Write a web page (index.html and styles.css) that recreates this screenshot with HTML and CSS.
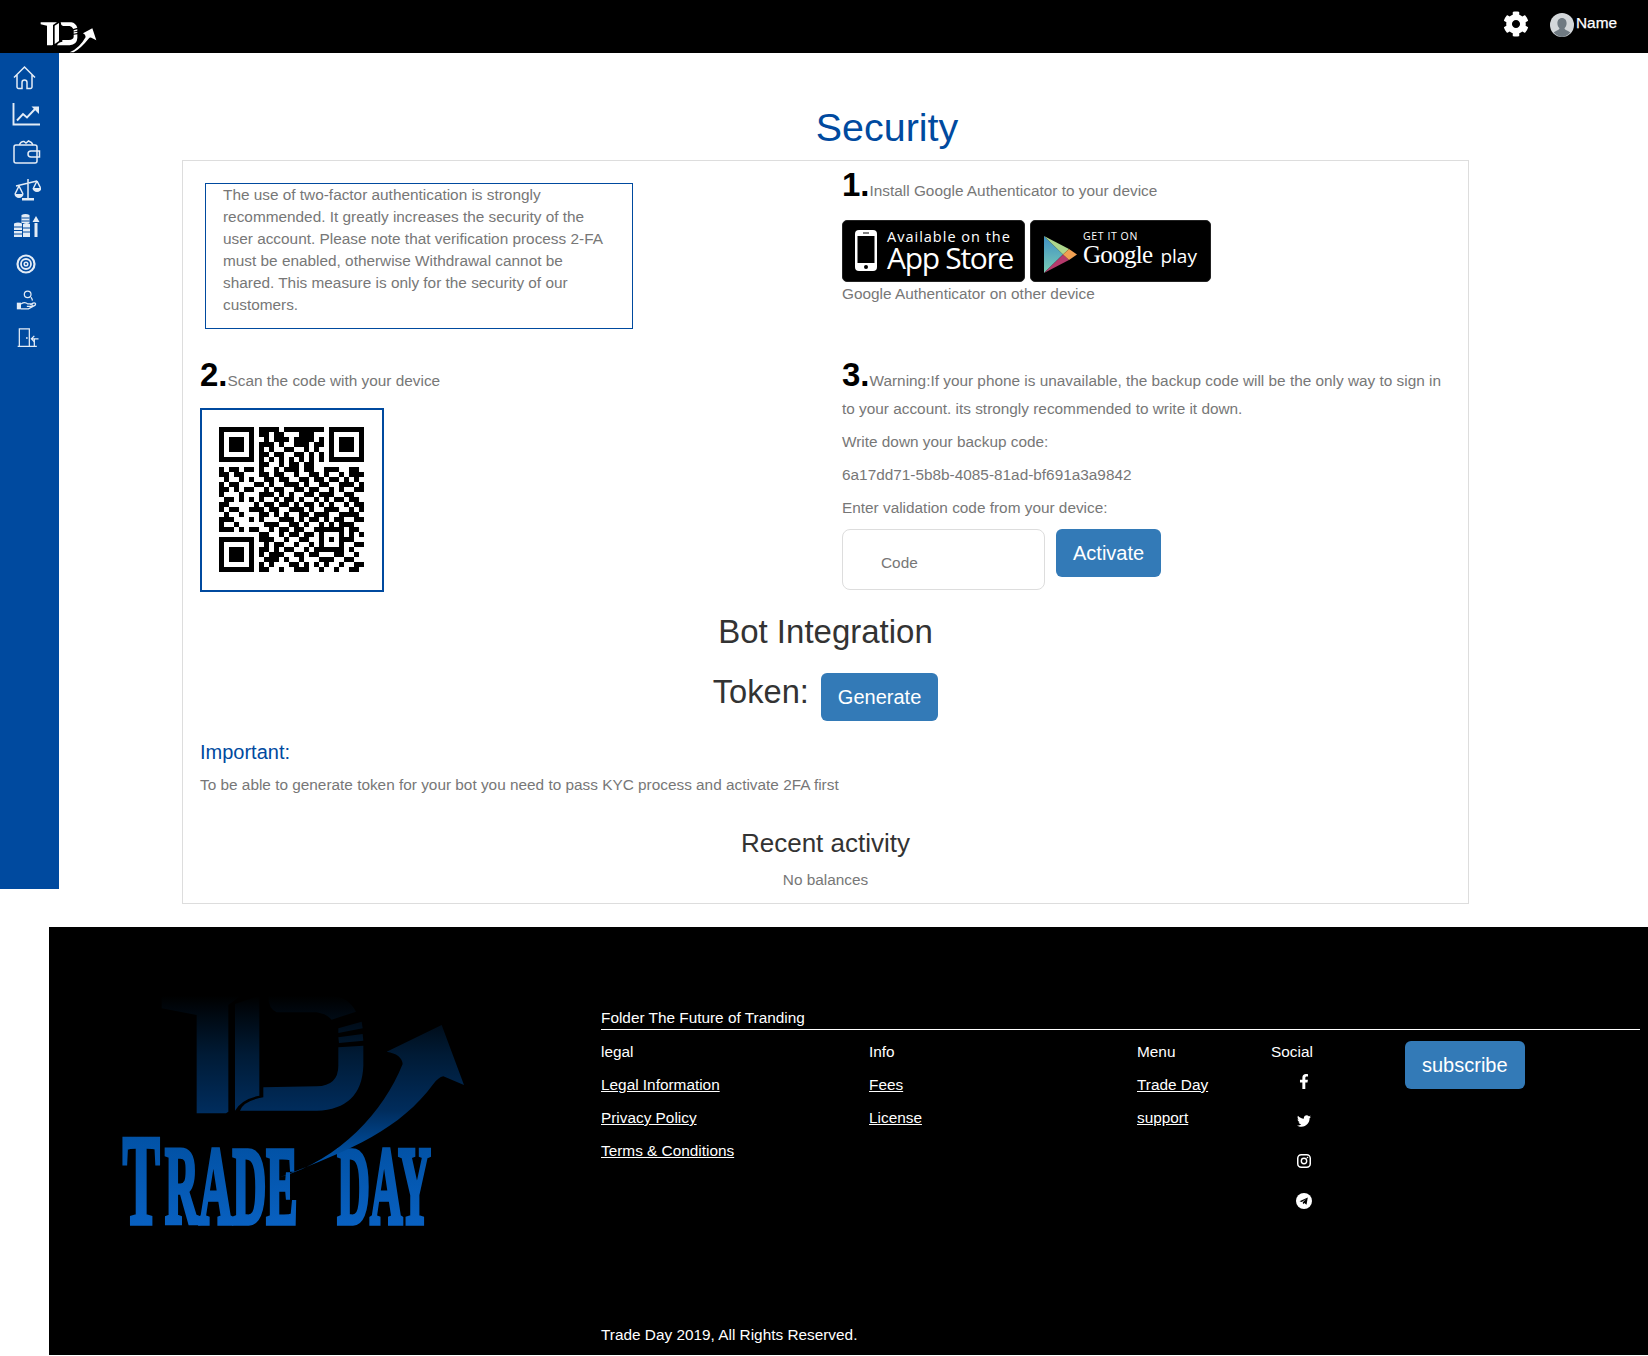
FILE: index.html
```html
<!DOCTYPE html>
<html lang="en">
<head>
<meta charset="utf-8">
<title>Security</title>
<link rel="stylesheet" href="styles.css">
</head>
<body>
<header class="topbar">
  <svg class="top-logo" viewBox="115 55 180 105" aria-label="TD logo">
    <path d="M123 68H172L160 76V135L157 137H142V78L123 74Z"/>
    <path d="M165 78L178 70V124L165 133Z"/>
    <path d="M183 68H215Q228 70 233 84L221 88Q217 80 210 79H190Q183 76 183 68Z"/>
    <path d="M222 92L233 89V93L222 96ZM222 98L233 96V100L222 102Z"/>
    <path d="M222 105L233 104V115Q232 135 210 137H172Q175 128 188 126V121H208Q221 120 222 112Z"/>
    <path d="M210 158Q240 145 258 112Q258 105 250 101L278 86L290 122L275 114Q270 113 266 118Q245 145 222 158Z"/>
  </svg>
  <div class="top-actions">
    <svg class="gear" viewBox="0 0 512 512"><path d="M487.4 315.7l-42.6-24.6c4.3-23.2 4.3-47 0-70.2l42.6-24.6c4.9-2.8 7.1-8.6 5.5-14-11.1-35.6-30-67.8-54.7-94.6-3.8-4.1-10-5.1-14.8-2.3L380.8 110c-17.9-15.4-38.5-27.3-60.8-35.1V25.8c0-5.6-3.9-10.5-9.4-11.7-36.7-8.2-74.3-7.8-109.2 0-5.5 1.2-9.4 6.1-9.4 11.7V75c-22.2 7.9-42.8 19.8-60.8 35.1L88.7 85.5c-4.9-2.8-11-1.9-14.8 2.3-24.7 26.7-43.6 58.9-54.7 94.6-1.7 5.4.6 11.2 5.5 14L67.3 221c-4.3 23.2-4.3 47 0 70.2l-42.6 24.6c-4.9 2.8-7.1 8.6-5.5 14 11.1 35.6 30 67.8 54.7 94.6 3.8 4.1 10 5.1 14.8 2.3l42.6-24.6c17.9 15.4 38.5 27.3 60.8 35.1v49.2c0 5.6 3.9 10.5 9.4 11.7 36.7 8.2 74.3 7.8 109.2 0 5.5-1.2 9.4-6.1 9.4-11.7v-49.2c22.2-7.9 42.8-19.8 60.8-35.1l42.6 24.6c4.9 2.8 11 1.9 14.8-2.3 24.7-26.7 43.6-58.9 54.7-94.6 1.5-5.5-.7-11.3-5.6-14.1zM256 336c-44.1 0-80-35.9-80-80s35.9-80 80-80 80 35.9 80 80-35.9 80-80 80z"/></svg>
    <div class="user">
      <svg class="avatar" viewBox="0 0 24 24"><circle cx="12" cy="12" r="12" fill="#d3d7da"/><path d="M12 5c3 0 4.600 2.400 4.600 5.300 0 2.200-.9 4-2.100 5 .2 1 .9 1.600 2.500 2.200 1.500.5 2.600 1.300 3.300 2.100A12 12 0 0 1 12 24a12 12 0 0 1-8.300-4.400c.7-.8 1.800-1.600 3.300-2.100 1.600-.6 2.300-1.200 2.500-2.200-1.200-1-2.100-2.800-2.100-5C7.400 7.400 9 5 12 5z" fill="#6f7a82"/></svg>
      <span class="user-name">Name</span>
    </div>
  </div>
</header>

<div class="layout">
  <nav class="sidebar">
    <svg class="nav-icon" viewBox="0 0 30 30"><path d="M3 15.500 13.500 5 24 15.500M6 13v12a1.500 1.500 0 0 0 1.500 1.500H11v-6a2.500 2.500 0 0 1 5 0v6h3.500A1.500 1.500 0 0 0 21 25V13"/></svg>
    <svg class="nav-icon icon-bold" viewBox="0 0 30 30"><path d="M2.500 4v21.500H29"/><path d="M6 21.500l6-6.500 4 3.500 8.500-9"/><path class="solid" d="M20.500 7.500H28V15z"/></svg>
    <svg class="nav-icon" viewBox="0 0 30 30"><path d="M5 8h19a2 2 0 0 1 2 2v14a2 2 0 0 1-2 2H5a2 2 0 0 1-2-2V10a2 2 0 0 1 2-2z"/><path d="M20 14h8.500v6H20a3 3 0 0 1 0-6z"/><path d="M8.500 8a4 4 0 0 1 4.500-3.500L15 6l2.500-2 3 1.500L22 8"/></svg>
    <svg class="nav-icon" viewBox="-1 0 30 30"><path d="M16 5v20M4 12l21-5"/><path d="M7 12l-4 8M7 12l4 8M25 7l-3.500 7M25 7l3.500 7"/><path class="solid" d="M2.500 20a4.500 4 0 0 0 9 0zM20.500 14a4.500 4 0 0 0 9 0zM10 24h12v2.500H10z"/></svg>
    <svg class="nav-icon" viewBox="0 1 30 30"><path class="solid" d="M3 13.500q4-2 8 0V27H3zM12 14q3.500-2 7 0v13h-7zM10.500 5q4-2 8 0v8h-8zM23.500 13h3v14h-3zM25 6l3.500 6h-7z"/><path class="cut" d="M3 17h8M3 20.500h8M3 24h8M12 18h7M12 22h7M10.500 8h8M10.500 11h8"/></svg>
    <svg class="nav-icon" viewBox="0 -1 30 30"><circle cx="15" cy="15" r="8.500" stroke-width="2.200"/><circle cx="15" cy="15" r="5" stroke-width="1.800"/><circle cx="15" cy="15" r="1.800" stroke-width="1.500"/></svg>
    <svg class="nav-icon" viewBox="-3 -2 36 36"><circle cx="17" cy="8" r="4"/><path class="solid" d="M4 18h5v8H4z"/><path d="M9 19.500c3-2 6-2 8 0h4c2 0 2 3 0 3h-5M9 25.500h9l8-4.500c1.500-2-.5-3.500-2.500-2.500L20 20.500"/><path d="M21 11.500c1 1.500 2 2.500 1.500 4"/></svg>
    <svg class="nav-icon" viewBox="-4 -2 36 36"><path d="M6 26V5h12v21M4 26h23M24 17v9"/><path d="M29 17h-8M24 13.500 20.500 17l3.500 3.500"/><path class="solid" d="M14 15h2v2h-2z"/></svg>
  </nav>

  <main class="content">
    <h1 class="page-title">Security</h1>
    <section class="panel">
      <div class="steps">
        <div class="notice">The use of two-factor authentication is strongly recommended. It greatly increases the security of the user account. Please note that verification process 2-FA must be enabled, otherwise Withdrawal cannot be shared. This measure is only for the security of our customers.</div>
        <div class="step-one">
          <p class="step-line"><b class="num">1.</b>Install Google Authenticator to your device</p>
          <div class="badges">
            <div class="badge badge-apple">
              <svg class="phone" viewBox="0 0 22 41"><rect width="22" height="41" rx="4" fill="#fff"/><rect x="2.500" y="6" width="17" height="27" fill="#000"/><circle cx="11" cy="37" r="2" fill="#000"/><rect x="8" y="2.500" width="6" height="1" fill="#000"/></svg>
              <div class="badge-text">
                <span class="apple-small">Available on the</span>
                <span class="apple-big">App Store</span>
              </div>
            </div>
            <div class="badge badge-play">
              <svg class="play-mark" viewBox="0 0 33 37"><defs><linearGradient id="playblue" x1="0" y1="0" x2="0" y2="1"><stop offset="0" stop-color="#3f8fc4"/><stop offset="1" stop-color="#79cdb4"/></linearGradient></defs><polygon points="0,0 0,37 19,18.500" fill="url(#playblue)"/><polygon points="0,0 19,18.500 25,13" fill="#add68c"/><polygon points="0,37 19,18.500 25,24" fill="#b53a6c"/><polygon points="25,13 33,18.500 25,24 19,18.500" fill="#f1a052"/></svg>
              <div class="badge-text">
                <span class="play-small">GET IT ON</span>
                <span class="play-big"><span class="play-google">Google</span><span class="play-word">play</span></span>
              </div>
            </div>
          </div>
          <p class="plain-line auth-other">Google Authenticator on other device</p>
        </div>
        <div class="step-two">
          <p class="step-line"><b class="num">2.</b>Scan the code with your device</p>
          <div class="qr-frame">
            <svg class="qr" viewBox="0 0 29 29" shape-rendering="crispEdges">
              <path fill-rule="evenodd" d="M0 0h7v7H0zM1 1v5h5V1zM2 2h3v3H2zM22 0h7v7h-7zM23 1v5h5V1zM24 2h3v3h-3zM0 22h7v7H0zM1 23v5h5v-5zM2 24h3v3H2z"/>
              <path class="qr-runs" d="M8 .5h4M13 .5h8M8 1.500h2M11 1.500h2M16 1.500h3M9 2.500h1M11 2.500h3M15 2.500h4M20 2.500h1M8 3.500h3M12 3.500h1M15 3.500h3M19 3.500h2M8 4.500h1M10 4.500h1M13 4.500h2M17 4.500h1M19 4.500h1M8 5.500h2M11 5.500h2M15 5.500h2M18 5.500h1M20 5.500h1M8 6.500h1M10 6.500h1M12 6.500h1M14 6.500h1M16 6.500h1M18 6.500h1M20 6.500h1M8 7.500h2M12 7.500h1M14 7.500h2M17 7.500h2
              M0 8.500h1M2 8.500h2M5 8.500h2M8 8.500h1M11 8.500h1M13 8.500h3M17 8.500h2M21 8.500h3M26 8.500h2
              M0 9.500h2M3 9.500h2M8 9.500h2M11 9.500h2M15 9.500h1M18 9.500h2M21 9.500h1M24 9.500h1M26 9.500h3
              M1 10.500h1M4 10.500h1M6 10.500h1M9 10.500h2M12 10.500h2M16 10.500h2M19 10.500h2M22 10.500h2M25 10.500h1M27 10.500h1
              M0 11.500h1M2 11.500h2M7 11.500h2M10 11.500h1M13 11.500h3M17 11.500h1M20 11.500h2M24 11.500h3M28 11.500h1
              M0 12.500h2M3 12.500h1M5 12.500h2M9 12.500h1M11 12.500h2M15 12.500h2M18 12.500h2M22 12.500h1M24 12.500h1M27 12.500h2
              M0 13.500h1M4 13.500h1M8 13.500h3M12 13.500h1M14 13.500h1M17 13.500h2M20 13.500h3M25 13.500h2
              M1 14.500h2M4 14.500h1M6 14.500h1M8 14.500h1M11 14.500h1M13 14.500h2M16 14.500h1M19 14.500h1M21 14.500h1M23 14.500h2M26 14.500h2
              M0 15.500h2M7 15.500h1M9 15.500h2M12 15.500h2M15 15.500h1M17 15.500h2M20 15.500h1M22 15.500h1M25 15.500h1M27 15.500h2
              M0 16.500h1M2 16.500h2M6 16.500h3M10 16.500h2M14 16.500h3M18 16.500h1M21 16.500h3M26 16.500h1M28 16.500h1
              M1 17.500h1M4 17.500h1M8 17.500h2M11 17.500h1M13 17.500h1M16 17.500h2M19 17.500h3M24 17.500h4
              M0 18.500h3M6 18.500h1M8 18.500h1M12 18.500h3M16 18.500h1M18 18.500h2M21 18.500h1M23 18.500h2M27 18.500h2
              M0 19.500h1M3 19.500h1M9 19.500h3M14 19.500h2M17 19.500h1M20 19.500h1M22 19.500h1M24 19.500h3
              M0 20.500h3M4 20.500h1M6 20.500h2M10 20.500h1M12 20.500h2M15 20.500h2M19 20.500h6M26 20.500h2
              M8 21.500h2M12 21.500h1M14 21.500h2M17 21.500h2M20 21.500h1M24 21.500h1M26 21.500h1M28 21.500h1
              M8 22.500h3M13 22.500h1M16 22.500h2M20 22.500h1M22 22.500h1M24 22.500h3
              M9 23.500h1M11 23.500h2M15 23.500h1M18 23.500h1M20 23.500h1M24 23.500h1M27 23.500h2
              M8 24.500h2M11 24.500h1M13 24.500h2M17 24.500h1M19 24.500h6M26 24.500h1
              M8 25.500h1M10 25.500h3M15 25.500h2M18 25.500h2M23 25.500h2M27 25.500h1
              M9 26.500h3M13 26.500h1M16 26.500h1M20 26.500h3M25 26.500h2
              M8 27.500h1M10 27.500h1M14 27.500h2M17 27.500h1M19 27.500h1M21 27.500h1M24 27.500h1M27 27.500h2
              M8 28.500h2M12 28.500h1M15 28.500h3M20 28.500h1M23 28.500h1M26 28.500h2"/>
            </svg>
          </div>
        </div>
        <div class="step-three">
          <p class="step-line step-warning"><b class="num">3.</b>Warning:If your phone is unavailable, the backup code will be the only way to sign in to your account. its strongly recommended to write it down.</p>
          <p class="plain-line spaced">Write down your backup code:</p>
          <p class="plain-line spaced">6a17dd71-5b8b-4085-81ad-bf691a3a9842</p>
          <p class="plain-line spaced last-spaced">Enter validation code from your device:</p>
          <div class="activate-row">
            <input class="code-input" type="text" placeholder="Code">
            <button class="btn" type="button">Activate</button>
          </div>
        </div>
      </div>

      <h2 class="bot-title">Bot Integration</h2>
      <div class="token-row">
        <span class="token-label">Token:</span>
        <button class="btn" type="button">Generate</button>
      </div>
      <h4 class="important">Important:</h4>
      <p class="plain-line">To be able to generate token for your bot you need to pass KYC process and activate 2FA first</p>
      <h3 class="recent-title">Recent activity</h3>
      <p class="plain-line centered">No balances</p>
    </section>
  </main>
</div>

<footer class="footer">
  <svg class="footer-logo" viewBox="0 0 1200 820" aria-label="Trade Day logo">
    <defs>
      <linearGradient id="logograd" gradientUnits="userSpaceOnUse" x1="0" y1="50" x2="0" y2="740">
        <stop offset="0" stop-color="#000000"/>
        <stop offset=".25" stop-color="#001a34"/>
        <stop offset=".5" stop-color="#002c5c"/>
        <stop offset=".68" stop-color="#004e9e"/>
        <stop offset="1" stop-color="#0a64c8"/>
      </linearGradient>
      <linearGradient id="wordgrad" x1="0" y1="0" x2="0" y2="1">
        <stop offset="0" stop-color="#004e9e"/>
        <stop offset="1" stop-color="#0a64c8"/>
      </linearGradient>
    </defs>
    <g class="logo-fill">
      <path d="M185 52H420L385 78V398L378 403H290V108L185 88Z"/>
      <path d="M405 395V75L478 50V350Q425 360 405 395Z"/>
      <path d="M505 52H700Q745 55 768 98L695 122Q680 105 650 100H530Q505 90 505 52Z"/>
      <path d="M715 148L785 128L788 148L715 162ZM715 175L788 165L790 185L717 192Z"/>
      <path d="M715 205L790 200V260Q785 390 650 395H420Q430 365 490 355V325L650 322Q715 320 715 260Z"/>
    </g>
    <text class="logo-word" transform="translate(68 731) scale(.44 1)" font-size="378">T</text>
    <text class="logo-word" transform="translate(195 731) scale(.425 1)" font-size="330">RADE</text>
    <text class="logo-word" transform="translate(712 731) scale(.41 1)" font-size="330">DAY</text>
    <path class="logo-fill" d="M540 595C720 540 850 400 908 255Q905 225 860 218L1025 138L1092 318L1030 292Q1015 295 1000 315C900 450 760 510 540 595Z"/>
  </svg>
  <div class="footer-main">
    <div class="tagline">Folder The Future of Tranding</div>
    <div class="footer-cols">
      <div class="fcol">
        <div class="frow">legal</div>
        <a class="frow flink" href="#">Legal Information</a>
        <a class="frow flink" href="#">Privacy Policy</a>
        <a class="frow flink" href="#">Terms &amp; Conditions</a>
      </div>
      <div class="fcol">
        <div class="frow">Info</div>
        <a class="frow flink" href="#">Fees</a>
        <a class="frow flink" href="#">License</a>
      </div>
      <div class="fcol">
        <div class="frow">Menu</div>
        <a class="frow flink" href="#">Trade Day</a>
        <a class="frow flink" href="#">support</a>
      </div>
      <div class="fcol">
        <div class="social-title">Social</div>
        <div class="social-icon"><svg class="si-f" viewBox="0 0 320 512"><path d="M279.14 288l14.22-92.66h-88.91v-60.13c0-25.35 12.42-50.06 52.24-50.06h40.42V6.26S260.43 0 225.36 0c-73.22 0-121.08 44.38-121.08 124.72v70.62H22.89V288h81.39v224h100.17V288z"/></svg></div>
        <div class="social-icon"><svg class="si-t" viewBox="0 0 512 512"><path d="M459.37 151.716c.325 4.548.325 9.097.325 13.645 0 138.72-105.583 298.558-298.558 298.558-59.452 0-114.68-17.219-161.137-47.106 8.447.974 16.568 1.299 25.34 1.299 49.055 0 94.213-16.568 130.274-44.832-46.132-.975-84.792-31.188-98.112-72.772 6.498.974 12.995 1.624 19.818 1.624 9.421 0 18.843-1.3 27.614-3.573-48.081-9.747-84.143-51.98-84.143-102.985v-1.299c13.969 7.797 30.214 12.67 47.431 13.319-28.264-18.843-46.781-51.005-46.781-87.391 0-19.492 5.197-37.36 14.294-52.954 51.655 63.675 129.3 105.258 216.365 109.807-1.624-7.797-2.599-15.918-2.599-24.04 0-57.828 46.782-104.934 104.934-104.934 30.213 0 57.502 12.67 76.67 33.137 23.715-4.548 46.456-13.32 66.599-25.34-7.798 24.366-24.366 44.833-46.132 57.827 21.117-2.273 41.584-8.122 60.426-16.243-14.292 20.791-32.161 39.308-52.628 54.253z"/></svg></div>
        <div class="social-icon"><svg class="si-i" viewBox="0 0 14 14"><rect x=".75" y=".75" width="12.500" height="12.500" rx="3.500" fill="none" stroke="#fff" stroke-width="1.500"/><circle cx="7" cy="7" r="2.700" fill="none" stroke="#fff" stroke-width="1.400"/><circle cx="10.500" cy="3.500" r=".8" fill="#fff"/></svg></div>
        <div class="social-icon"><svg class="si-g" viewBox="0 0 16 16"><circle cx="8" cy="8" r="8" fill="#fff"/><path d="M3.500 8.300 11.800 4.500 10.500 11.800 8.300 10 7 11.200 6.800 9.300 10 6 5.800 8.900z" fill="#000"/></svg></div>
      </div>
      <div class="fcol">
        <button class="btn" type="button">subscribe</button>
      </div>
    </div>
    <div class="copyright">Trade Day 2019, All Rights Reserved.</div>
  </div>
</footer>
</body>
</html>
```

FILE: styles.css
```css
* { box-sizing: border-box; }
html, body { margin: 0; padding: 0; }
body {
  font-family: "Liberation Sans", Arial, sans-serif;
  font-size: 15.36px;
  line-height: 22px;
  color: #777;
  background: #fff;
  width: 1648px;
  overflow-x: hidden;
}
p { margin: 0; }

/* top bar */
.topbar {
  height: 53px;
  background: #000;
  display: flex;
  justify-content: space-between;
  padding: 0 31px 0 38px;
}
.top-logo { width: 60px; height: 35px; margin-top: 18px; fill: #fff; }
.top-actions { display: flex; align-items: center; gap: 21px; padding-bottom: 6px; }
.gear { width: 26px; height: 26px; fill: #fff; }
.user { display: flex; align-items: center; gap: 2px; }
.avatar { width: 24px; height: 24px; margin-top: 2px; }
.user-name { color: #fff; font-size: 15.36px; margin-top: -2px; -webkit-text-stroke: .25px #fff; }

/* layout */
.layout { display: flex; align-items: flex-start; }
.sidebar {
  width: 59px;
  height: 836px;
  flex: none;
  background: #004a9f;
  padding: 9px 0 0 11px;
  display: flex;
  flex-direction: column;
  gap: 7.3px;
}
.nav-icon {
  width: 30px;
  height: 30px;
  fill: none;
  stroke: #e3ecf6;
  stroke-width: 1.500;
}
.icon-bold { stroke-width: 1.900; }
.nav-icon .solid { fill: #e3ecf6; stroke: none; }
.nav-icon .cut { stroke: #004a9f; stroke-width: 1; }

.content { flex: 1; padding-top: 49px; min-width: 0; }
.page-title {
  margin: 0 0 8px;
  padding-left: 67px;
  text-align: center;
  font-size: 39.400px;
  line-height: 50px;
  font-weight: 400;
  color: #004a9f;
}
.panel {
  margin: 0 0 23px 123px;
  width: 1287px;
  border: 1px solid #ddd;
  padding: 16px 17px 12px;
}
.steps {
  display: grid;
  grid-template-columns: 642px 1fr;
  row-gap: 38px;
}
.notice {
  width: 428px;
  height: 146px;
  margin: 6px 0 0 5px;
  border: 1px solid #004a9f;
  padding: 0 20px 0 17px;
}
.step-line { line-height: 28px; }
.num {
  font-size: 33px;
  line-height: 0;
  font-weight: 700;
  color: #000;
}
.badges { display: flex; gap: 5px; margin-top: 15px; }
.badge {
  height: 61.500px;
  background: #000;
  border-radius: 5px;
  border: 1px solid #222;
  display: flex;
  color: #fff;
}
.badge-apple { width: 183px; padding: 9px 0 0 12px; gap: 10px; }
.badge-play { width: 181px; padding: 15px 0 0 13px; gap: 6px; }
.phone { width: 22px; height: 41px; }
.play-mark { width: 33px; height: 37px; }
.badge-text { display: flex; flex-direction: column; }
.apple-small { font-family: "Open Sans", sans-serif; font-size: 14.500px; line-height: 15px; margin-top: -1px; letter-spacing: 1px; white-space: nowrap; }
.apple-big { font-family: "Open Sans", sans-serif; font-size: 30px; line-height: 27px; letter-spacing: -1.300px; white-space: nowrap; }
.play-small { font-family: "Open Sans", sans-serif; font-size: 10.500px; line-height: 12px; margin-top: -6px; letter-spacing: .6px; white-space: nowrap; }
.play-big { display: flex; align-items: baseline; gap: 8px; line-height: 25px; }
.play-google { font-family: "Liberation Serif", serif; font-size: 25px; letter-spacing: -.7px; }
.play-word { font-family: "Open Sans", sans-serif; font-size: 19px; }
.auth-other { margin-top: 1.500px; }
.step-warning { margin-bottom: 8px; }
.spaced { margin-bottom: 11px; }
.last-spaced { margin-bottom: 10px; }
.qr-frame {
  width: 184px;
  height: 184px;
  margin-top: 13px;
  border: 2px solid #004a9f;
  padding: 17px;
}
.qr { display: block; width: 145px; height: 145px; fill: #000; }
.qr-runs { fill: none; stroke: #000; stroke-width: 1; }
.activate-row { display: flex; align-items: flex-start; gap: 11px; }
.code-input {
  width: 203px;
  height: 61px;
  border: 1px solid #ddd;
  border-radius: 8px;
  padding: 7px 38px 0;
  font: inherit;
  color: #777;
  background: #fff;
  outline: none;
}
.code-input::placeholder { color: #777; opacity: 1; }
.btn {
  height: 48px;
  padding: 0 17px;
  border: 0;
  border-radius: 6px;
  background: #337ab7;
  color: #fff;
  font-family: inherit;
  font-size: 20px;
  line-height: 26px;
  white-space: nowrap;
}

.bot-title {
  margin: 20px 0 21px;
  text-align: center;
  font-size: 33px;
  line-height: 40px;
  font-weight: 400;
  color: #333;
}
.token-row { display: flex; justify-content: center; gap: 12px; align-items: flex-start; }
.token-label { font-size: 32.640px; line-height: 38px; color: #333; }
.important {
  margin: 17px 0 8px;
  font-size: 20px;
  line-height: 28px;
  font-weight: 400;
  color: #004a9f;
}
.recent-title {
  margin: 29px 0 8px;
  text-align: center;
  font-size: 26px;
  line-height: 36px;
  font-weight: 400;
  color: #333;
}
.centered { text-align: center; }

/* footer */
.footer {
  margin-left: 49px;
  height: 428px;
  background: #000;
  color: #fff;
  display: flex;
  align-items: flex-start;
}
.footer-logo { width: 400px; height: 273.330px; margin: 52px 0 0 51px; flex: none; }
.logo-fill { fill: url(#logograd); }
.logo-word {
  font-family: "Liberation Serif", serif;
  font-weight: 700;
  fill: url(#wordgrad);
  stroke: url(#wordgrad);
  stroke-width: 16;
}
.footer-main {
  margin-left: 101px;
  width: 1039px;
  height: 100%;
  padding: 80px 0 9px;
  display: flex;
  flex-direction: column;
}
.tagline { border-bottom: 1px solid #fff; height: 23px; }
.footer-cols {
  display: grid;
  grid-template-columns: 268px 268px 134px 134px 1fr;
  margin-top: 11px;
}
.fcol { display: flex; flex-direction: column; align-items: flex-start; }
.frow { margin-bottom: 11px; }
.flink { color: #fff; text-decoration: underline; }
.social-title { margin-bottom: -2px; }
.social-icon {
  width: 66px;
  height: 40px;
  display: flex;
  align-items: center;
  justify-content: center;
}
.si-f { width: 10px; height: 15px; fill: #fff; }
.si-t { width: 14px; height: 14px; fill: #fff; }
.si-i { width: 14px; height: 14px; }
.si-g { width: 16px; height: 16px; }
.copyright { margin-top: auto; }
```
